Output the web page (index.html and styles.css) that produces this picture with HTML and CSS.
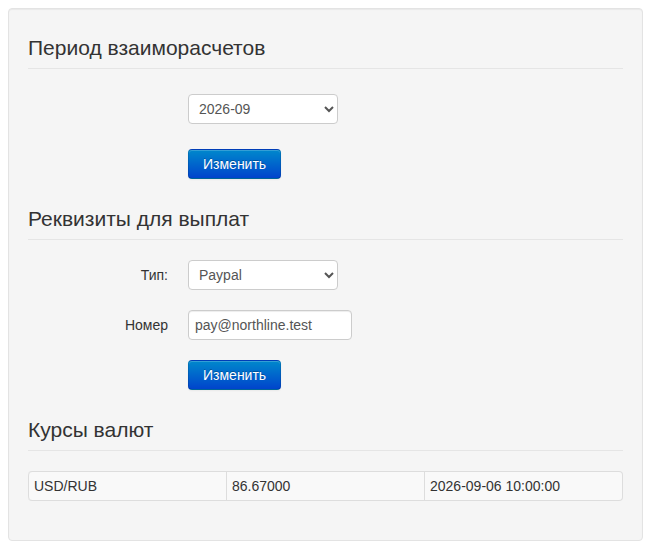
FILE: index.html
```html
<!DOCTYPE html>
<html lang="ru">
<head>
<meta charset="utf-8">
<title>Настройки выплат</title>
<link rel="stylesheet" href="styles.css">
</head>
<body>
<div class="well">
  <form class="section">
    <div class="legend">Период взаиморасчетов</div>
    <div class="row row-first">
      <div class="label"></div>
      <div class="control">
        <select class="field select">
          <option>2026-09</option>
        </select>
      </div>
    </div>
    <div class="row">
      <div class="label"></div>
      <div class="control"><button type="button" class="btn">Изменить</button></div>
    </div>
  </form>

  <form class="section">
    <div class="legend">Реквизиты для выплат</div>
    <div class="row">
      <div class="label">Тип:</div>
      <div class="control">
        <select class="field select">
          <option>Paypal</option>
        </select>
      </div>
    </div>
    <div class="row">
      <div class="label">Номер</div>
      <div class="control"><input class="field input" type="text" value="pay@northline.test"></div>
    </div>
    <div class="row">
      <div class="label"></div>
      <div class="control"><button type="button" class="btn">Изменить</button></div>
    </div>
  </form>

  <div class="section">
    <div class="legend">Курсы валют</div>
    <table class="rates">
      <tr>
        <td>USD/RUB</td>
        <td>86.67000</td>
        <td>2026-09-06 10:00:00</td>
      </tr>
    </table>
  </div>
</div>
</body>
</html>
```

FILE: styles.css
```css
html, body {
  margin: 0;
  padding: 0;
  background: #ffffff;
}
body {
  padding: 8px;
  font-family: "Liberation Sans", Arial, sans-serif;
  font-size: 14px;
  line-height: 20px;
  color: #333333;
}
.well {
  background: #f5f5f5;
  border: 1px solid #e3e3e3;
  border-radius: 4px;
  box-shadow: inset 0 1px 1px rgba(0, 0, 0, 0.05);
  padding: 19px;
  box-sizing: border-box;
  height: 533px;
}
.section {
  margin: 0;
  display: block;
}
.legend {
  font-size: 21px;
  line-height: 40px;
  color: #333333;
  border-bottom: 1px solid #e5e5e5;
  margin-bottom: 20px;
}
.row {
  display: grid;
  grid-template-columns: 140px 1fr;
  column-gap: 20px;
  margin-bottom: 20px;
}
.row-first {
  padding-top: 5px;
  margin-bottom: 25px;
}
.label {
  text-align: right;
  padding-top: 5px;
  font-size: 14px;
  line-height: 20px;
  color: #333333;
}
.control {
  display: flex;
  align-items: flex-start;
}
.field {
  font-family: "Liberation Sans", Arial, sans-serif;
  font-size: 14px;
  color: #555555;
  background: #ffffff;
  border: 1px solid #cccccc;
  border-radius: 4px;
  margin: 0;
}
.select {
  width: 150px;
  height: 30px;
  box-sizing: border-box;
  padding: 4px 6px;
}
.input {
  width: 150px;
  height: 20px;
  line-height: 20px;
  padding: 4px 6px;
  box-shadow: inset 0 1px 1px rgba(0, 0, 0, 0.075);
}
.btn {
  font-family: "Liberation Sans", Arial, sans-serif;
  font-size: 14px;
  line-height: 20px;
  padding: 4px 14px;
  margin: 0;
  color: #ffffff;
  text-shadow: 0 -1px 0 rgba(0, 0, 0, 0.25);
  background-color: #006dcc;
  background-image: linear-gradient(to bottom, #0088cc, #0044cc);
  border: 1px solid;
  border-color: rgba(0, 0, 0, 0.1) rgba(0, 0, 0, 0.1) rgba(0, 0, 0, 0.25);
  border-radius: 4px;
  box-shadow: inset 0 1px 0 rgba(255, 255, 255, 0.2), 0 1px 2px rgba(0, 0, 0, 0.05);
  cursor: pointer;
}
.rates {
  width: 100%;
  table-layout: fixed;
  border-collapse: separate;
  border-spacing: 0;
  border: 1px solid #dddddd;
  border-left: 0;
  border-radius: 4px;
  margin-bottom: 20px;
  background: #f9f9f9;
}
.rates td {
  padding: 4px 5px;
  line-height: 20px;
  text-align: left;
  border-left: 1px solid #dddddd;
  color: #333333;
}
.rates td:first-child {
  border-radius: 4px 0 0 4px;
}
```
